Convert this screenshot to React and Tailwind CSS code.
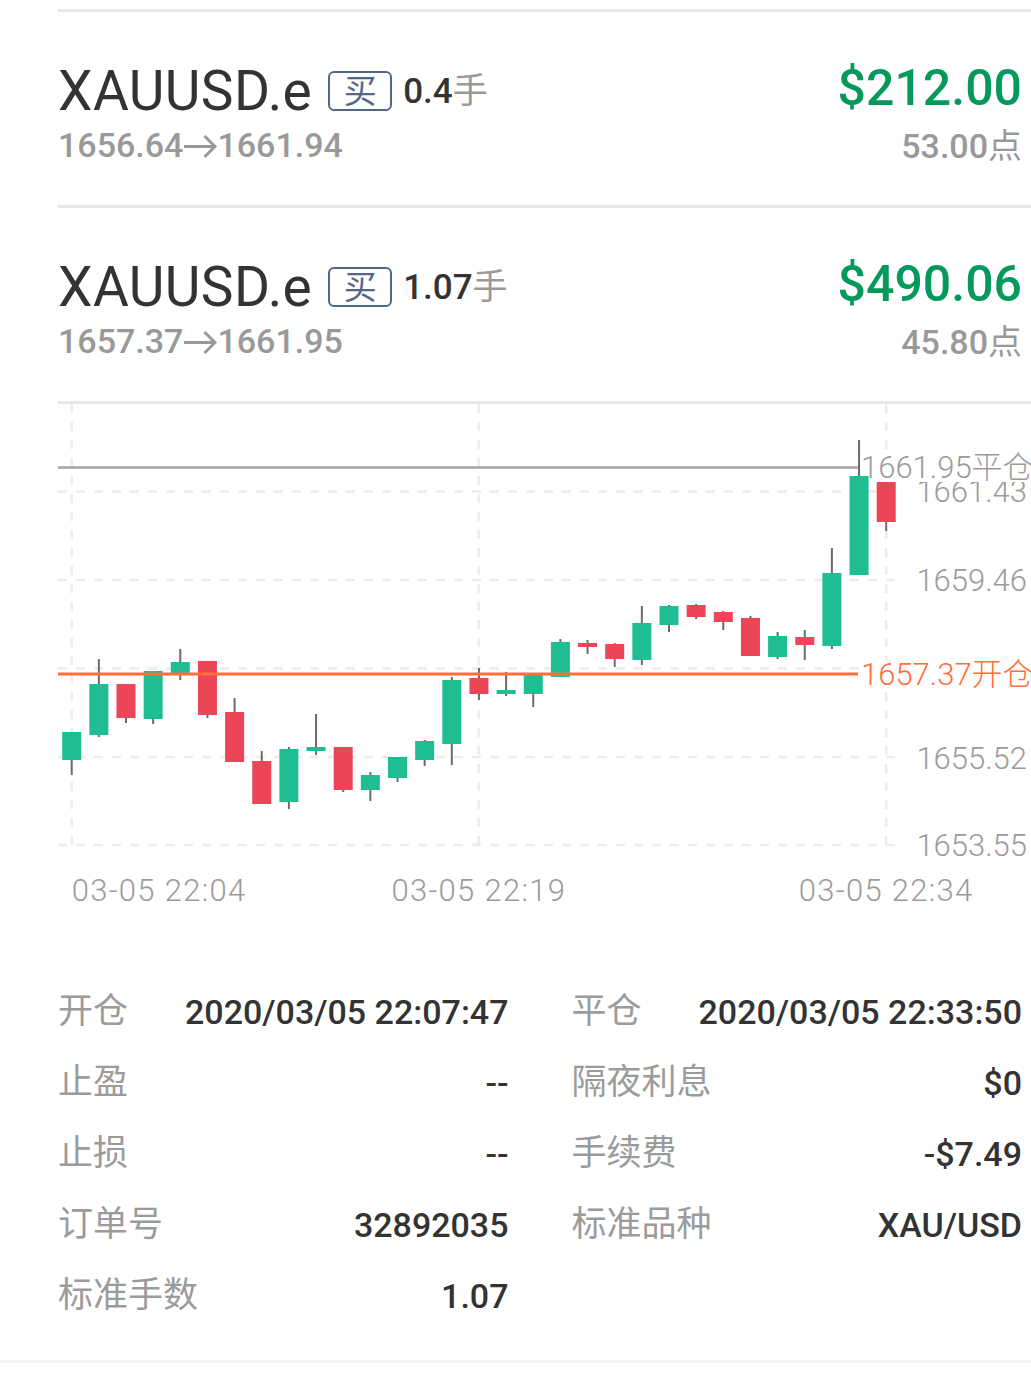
import React from "react";

const GREEN = "#1fbd93";
const RED = "#eb4557";
const WICK = "#6b6b6b";

// [bodyTop, bodyBottom, wickTop, wickBottom, up]
const candles = [
  [733, 761, 733, 776, true],
  [685, 736, 660, 738, true],
  [685, 719, 685, 724, false],
  [672, 720, 672, 725, true],
  [663, 674, 650, 681, true],
  [662, 716, 662, 719, false],
  [713, 763, 699, 763, false],
  [762, 805, 752, 805, false],
  [750, 803, 748, 810, true],
  [748, 752, 715, 756, true],
  [748, 791, 748, 793, false],
  [776, 791, 773, 802, true],
  [758, 779, 758, 783, true],
  [742, 761, 741, 767, true],
  [681, 745, 678, 766, true],
  [679, 695, 669, 701, false],
  [691, 695, 673, 697, true],
  [676, 695, 676, 708, true],
  [643, 678, 640, 678, true],
  [644, 648, 641, 655, false],
  [645, 660, 644, 668, false],
  [624, 661, 607, 666, true],
  [607, 626, 606, 633, true],
  [606, 618, 605, 620, false],
  [613, 623, 612, 631, false],
  [619, 657, 617, 657, false],
  [637, 658, 633, 660, true],
  [638, 646, 631, 661, false],
  [574, 647, 549, 650, true],
  [477, 576, 441, 576, true],
  [483, 523, 483, 532, false],
];

const FONT = "Roboto, 'Noto Sans CJK SC', sans-serif";

const Chart = () => (
  <svg width="973" height="573" viewBox="58 405 973 573" className="block">
    {/* grid */}
    {[492.5, 581, 669.5, 758, 846].map((y) => (
      <line key={y} x1="58" x2="898" y1={y} y2={y} stroke="#ececec" strokeWidth="2.5" strokeDasharray="9 9" />
    ))}
    {[71.7, 478.8, 886.2].map((x) => (
      <line key={x} x1={x} x2={x} y1="405" y2="846" stroke="#ececec" strokeWidth="2.5" strokeDasharray="9 9" />
    ))}

    {/* price axis */}
    <g fontFamily={FONT} fontWeight="300" fontSize="31" fill="#9b9b9b" textAnchor="end">
      <text x="1027" y="503.3">1661.43</text>
      <text x="1027" y="591.7">1659.46</text>
      <text x="1027" y="770">1655.52</text>
      <text x="1027" y="857">1653.55</text>
    </g>
    <rect x="860" y="455" width="171" height="28" fill="#fff" />
    <rect x="860" y="661" width="171" height="29" fill="#fff" />

    {/* candles */}
    {candles.map(([bt, bb, wt, wb, up], i) => {
      const cx = 71.7 + 27.15 * i;
      return (
        <g key={i}>
          <line x1={cx} x2={cx} y1={wt} y2={wb} stroke={WICK} strokeWidth="2" />
          <rect x={cx - 9.5} y={bt} width="19" height={bb - bt} fill={up ? GREEN : RED} />
        </g>
      );
    })}

    {/* close / open lines */}
    <line x1="58" x2="858" y1="468.5" y2="468.5" stroke="#a5a5a5" strokeWidth="2.5" />
    <line x1="58" x2="858" y1="675" y2="675" stroke="#ff6e3b" strokeWidth="3" />
    <g fontFamily={FONT} fontWeight="300" fontSize="31">
      <text x="861" y="479.3" fill="#9b9b9b">1661.95平仓</text>
      <text x="861" y="685.5" fill="#ff6e3b">1657.37开仓</text>
    </g>

    {/* time axis */}
    <g fontFamily={FONT} fontWeight="300" fontSize="31" letterSpacing="1.3" fill="#9b9b9b">
      <text x="71.7" y="901.7">03-05 22:04</text>
      <text x="478.8" y="901.7" textAnchor="middle">03-05 22:19</text>
      <text x="886.2" y="901.7" textAnchor="middle">03-05 22:34</text>
    </g>
  </svg>
);

const Arrow = () => (
  <svg width="34" height="26" viewBox="0 0 34 26" className="inline-block align-[-3px]" fill="none" stroke="#999" strokeWidth="3">
    <path d="M1 12.5H32M21.5 2L32 12.5L21.5 23" />
  </svg>
);

const Position = ({ lots, from, to, profit, points }) => (
  <div>
    <div className="h-[3px] bg-[#e6e6eb]" />
    <div className="h-[193px] flex justify-between pr-[9px]">
      <div className="pt-[47px]">
        <div className="flex items-center h-[64px]">
          <span className="text-[55px] leading-[64px] tracking-[0.4px] text-[#333]">XAUUSD.e</span>
          <span className="ml-[16px] w-[64px] h-[40px] border-2 border-[#52688a] rounded-[6px] flex items-center justify-center text-[33px] leading-none text-[#52688a]">
            买
          </span>
          <span className="ml-[11px] text-[35px] leading-none font-medium text-[#333]">
            {lots}
            <span className="font-normal text-[#999]">手</span>
          </span>
        </div>
        <div className="mt-[2px] text-[34px] leading-[40px] font-medium text-[#999]">
          {from}
          <Arrow />
          {to}
        </div>
      </div>
      <div className="pt-[46px] text-right">
        <div className="text-[50px] leading-[60px] font-medium text-[#07995c]">{profit}</div>
        <div className="mt-[8px] text-[34px] leading-[40px] font-medium text-[#999]">
          {points}
          <span className="font-normal">点</span>
        </div>
      </div>
    </div>
  </div>
);

const Row = ({ label, value }) => (
  <div className="h-[71px] flex items-center justify-between">
    <span className="text-[35px] text-[#9b9b9b]">{label}</span>
    <span className="text-[34px] font-medium text-[#333]">{value}</span>
  </div>
);

export default function App() {
  return (
    <div className="w-[1031px] min-h-[1382px] bg-white pt-[9px] pl-[58px] overflow-hidden font-[Roboto,'Noto_Sans_CJK_SC',sans-serif]">
      <Position lots="0.4" from="1656.64" to="1661.94" profit="$212.00" points="53.00" />
      <Position lots="1.07" from="1657.37" to="1661.95" profit="$490.06" points="45.80" />
      <div className="h-[3px] bg-[#e6e6eb]" />
      <Chart />

      {/* order details */}
      <div className="grid grid-cols-2 gap-x-[63px] pr-[9px]">
        <div className="flex flex-col">
          <Row label="开仓" value="2020/03/05 22:07:47" />
          <Row label="止盈" value="--" />
          <Row label="止损" value="--" />
          <Row label="订单号" value="32892035" />
          <Row label="标准手数" value="1.07" />
        </div>
        <div className="flex flex-col">
          <Row label="平仓" value="2020/03/05 22:33:50" />
          <Row label="隔夜利息" value="$0" />
          <Row label="手续费" value="-$7.49" />
          <Row label="标准品种" value="XAU/USD" />
        </div>
      </div>
      <div className="h-[28px]" />
      <div className="-ml-[58px] h-[3px] bg-[#f3f3f3]" />
    </div>
  );
}
